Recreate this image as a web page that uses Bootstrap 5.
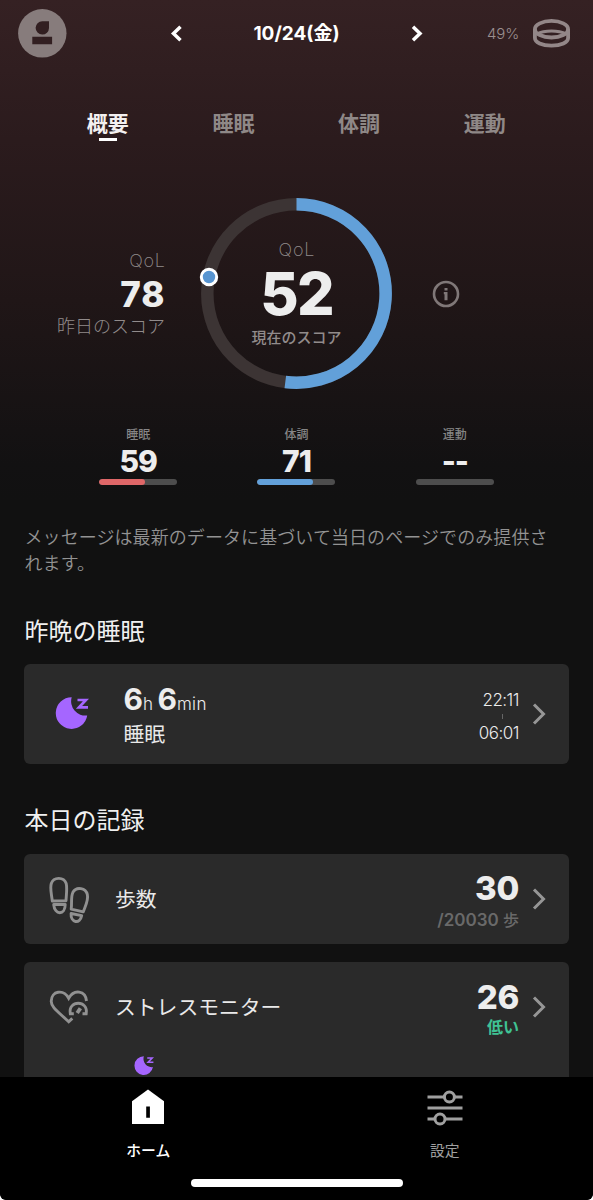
<!DOCTYPE html>
<html lang="ja">
<head>
<meta charset="utf-8">
<meta name="viewport" content="width=device-width, initial-scale=1">
<title>概要</title>
<link href="https://cdn.jsdelivr.net/npm/bootstrap@5.3.0/dist/css/bootstrap.min.css" rel="stylesheet">
<style>
  html { background: #fff; }
  body { margin: 0; background: #fff; font-family: Inter, "Noto Sans CJK JP", sans-serif; color: #ededed; line-height: 1; }
  svg { display: block; flex: none; }
  .screen { height: 1200px; overflow: hidden; border-radius: 0 0 6px 6px; background: linear-gradient(#352123 0, #2b1b1d 140px, #201617 300px, #121112 465px, #111 500px); }
  .jp { font-family: "Noto Sans CJK JP", sans-serif; }
  .topbar { height: 67px; padding: 0 24px 0 18px; display: grid; grid-template-columns: 150px 1fr 150px; }
  .datenav { width: 253px; justify-self: center; transform: translateX(2px); }
  .date { font-size: 19px; font-weight: 700; letter-spacing: 0; color: #fff; }
  .battery { font-size: 15px; font-weight: 300; color: #9b8f90; letter-spacing: -.2px; }
  .tabs { padding: 41px 45.5px 0 45px; height: 131px; }
  .tabs a { flex: 1; text-align: center; text-decoration: none; font-size: 21px; line-height: 29px; font-weight: 700; color: #8f8887; }
  .tabs a.active { color: #f3f0f0; }
  .tabs a.active::after { content: ""; display: block; width: 18px; height: 3px; margin: 1px auto 0; background: #fff; }
  .hero { display: grid; grid-template-columns: 165px 191px 1fr; column-gap: 36px; height: 191px; }
  .lite { font-weight: 200; }
  .muted { color: #918b8b; }
  .qol { font-size: 18px; line-height: 20px; letter-spacing: .8px; margin-right: -.8px; }
  .prev b { font-size: 35px; line-height: 36px; font-weight: 800; margin-top: 5px; letter-spacing: 1px; margin-right: -.5px; }
  .prev small { font-size: 18px; line-height: 24px; font-weight: 300; margin-top: 1px; }
  .gauge { position: relative; }
  .gauge svg { position: absolute; left: -8px; top: 0; }
  .now { padding-top: 42px; position: relative; }
  .now b { font-size: 59px; line-height: 58px; font-weight: 800; margin-top: 5px; letter-spacing: -1.8px; }
  .now small { font-size: 15px; line-height: 22px; font-weight: 500; margin-top: 3px; }
  .minis { margin: 37px 59px 0 59px; display: grid; grid-template-columns: repeat(3, 1fr); }
  .mini { display: flex; flex-direction: column; align-items: center; }
  .mini span { font-size: 12px; line-height: 16px; font-weight: 500; color: #858585; }
  .mini b { font-size: 30px; line-height: 32px; font-weight: 800; margin-top: 3px; letter-spacing: -1px; }
  .mini .progress { width: 78px; height: 6px; margin-top: 2px; border-radius: 3px; background: #4d4d4d; }
  .mini .progress-bar { border-radius: 3px; }
  .red { background: #df6768; } .blue { background: #62a0d9; }
  .note { margin: 38px 35px 0 24.5px; font-size: 18px; line-height: 26px; font-weight: 350; letter-spacing: .08px; color: #939393; }
  .sec { margin: 0 0 0 24.500px; font-size: 24px; line-height: 34px; font-weight: 400; color: #f0f0f0; }
  .tile { margin: 0 24px; border-radius: 6px; background: #2a2a2a; padding-right: 24px; }
  .big { font-size: 33px; line-height: 34px; font-weight: 800; letter-spacing: -.3px; padding-top: 4px; }
  .label { font-size: 20.800px; line-height: 30px; color: #e9e9e9; }
  .shift { margin-top: -3px; }
  .dur { line-height: 34px; margin-top: 1px; white-space: nowrap; }
  .dur b { font-size: 30px; font-weight: 700; }
  .dur i { font-size: 17px; font-weight: 300; font-style: normal; }
  .dur i:last-child { letter-spacing: .3px; }
  .times { font-size: 17px; font-weight: 350; line-height: 20px; letter-spacing: -.5px; margin-top: 5px; }
  .times u { width: 1px; height: 5px; margin: 4px 16px; background: #666; }
  .chev { margin: 0 -1px 0 13px; }
  .goal { font-size: 17px; line-height: 24px; font-weight: 600; color: #696969; margin-top: 2px; }
  .goal span { font-size: 16px; font-weight: 500; }
  .low { font-size: 16px; line-height: 24px; font-weight: 700; color: #3fc294; }
  .bottomnav { height: 123px; background: #000; position: absolute; left: 0; right: 0; top: 1077px; border-radius: 0 0 6px 6px; }
  .bottomnav a { width: 296.5px; text-decoration: none; font-size: 14.800px; line-height: 20px; font-weight: 500; color: #fff; }
  .bottomnav a + a { color: #a0a0a0; font-weight: 400; }
  .homebar { width: 212px; height: 8px; border-radius: 4px; background: #fff; margin: 19px auto 0; }
</style>
</head>
<body>
<svg width="0" height="0" style="display:none">
  <symbol id="moon" viewBox="0 0 34 34">
    <path fill="#a566ff" d="M16.700 2.300A15.800 15.800 0 1 0 32.200 20.500A14.300 14.300 0 0 1 16.700 2.300Z"/>
    <path fill="none" stroke="#a566ff" stroke-width="2.700" d="M22.500 5h8.400L24 12.300h9"/>
  </symbol>
</svg>
<div class="screen position-relative">
  <header class="topbar align-items-center">
    <svg width="49" height="49" viewBox="0 0 49 49"><circle cx="24.300" cy="24.300" r="24.200" fill="#877c7c"/><path fill="#321f21" d="M31 12.200V19A6.700 6.700 0 1 1 24.300 12.200ZM14.300 27.800h19.800v7.400H14.300z"/></svg>
    <div class="datenav d-flex align-items-center justify-content-between">
      <svg width="12" height="18" viewBox="0 0 12 18"><path d="M10.500 1.800L3.500 8.500l7 6.700" fill="none" stroke="#fff" stroke-width="3.500"/></svg>
      <div class="date">10/24(金)</div>
      <svg width="12" height="18" viewBox="0 0 12 18"><path d="M2 1.800l7 6.700-7 6.700" fill="none" stroke="#fff" stroke-width="3.500"/></svg>
    </div>
    <div class="d-flex align-items-center justify-content-end">
      <span class="battery">49%</span>
      <svg width="37" height="29" viewBox="0 0 37 29" fill="none" stroke="#938788" stroke-width="3.800" style="margin:-1px 1.500px 0 13.500px"><path d="M1.900 10v9c0 4.300 7 7.700 16.600 7.700S35.100 23.300 35.100 19v-9"/><ellipse cx="18.500" cy="10.200" rx="16.600" ry="8.300"/><path d="M3.800 15C8 12.900 13 12 18.500 12s10.500 .9 14.700 3" stroke-width="3.200"/></svg>
    </div>
  </header>

  <nav class="tabs d-flex jp"><a href="#" class="active">概要</a><a href="#">睡眠</a><a href="#">体調</a><a href="#">運動</a></nav>

  <section class="hero">
    <div class="prev d-flex flex-column align-items-end justify-content-center">
      <span class="qol lite muted">QoL</span>
      <b>78</b>
      <small class="jp muted">昨日のスコア</small>
    </div>
    <div class="gauge">
      <svg width="199" height="191" viewBox="-103.500 -95.500 199 191" fill="none" stroke-width="12.500">
        <circle r="89.200" stroke="#3c3434"/>
        <path stroke="#62a0d9" d="M0 -89.200A89.200 89.200 0 1 1 -11.200 88.500"/>
        <circle cx="-87.500" cy="-16.500" r="7.700" fill="#5794d0" stroke="#fff" stroke-width="3"/>
      </svg>
      <div class="now d-flex flex-column align-items-center">
        <span class="qol lite muted">QoL</span>
        <b>52</b>
        <small class="jp muted">現在のスコア</small>
      </div>
    </div>
    <div class="d-flex align-items-center ps-1">
      <svg width="28" height="28" viewBox="0 0 28 28"><circle cx="14" cy="14" r="12" fill="none" stroke="#807878" stroke-width="2.600"/><path d="M12.500 8h3v2.500h-3zM11.800 12h3.700v8.200h-3v-6h-.7z" fill="#807878"/></svg>
    </div>
  </section>

  <section class="minis">
    <div class="mini"><span class="jp">睡眠</span><b>59</b><div class="progress"><div class="progress-bar red" style="width:59%"></div></div></div>
    <div class="mini"><span class="jp">体調</span><b>71</b><div class="progress"><div class="progress-bar blue" style="width:71%"></div></div></div>
    <div class="mini"><span class="jp">運動</span><b>--</b><div class="progress"></div></div>
  </section>

  <p class="note jp">メッセージは最新のデータに基づいて当日のページでのみ提供されます。</p>

  <h2 class="sec jp" style="margin-top:38px">昨晩の睡眠</h2>
  <div class="tile d-flex align-items-center" style="height:100px;margin-top:17px;padding-left:31px">
    <svg width="34" height="34" style="margin-top:-4px"><use href="#moon"/></svg>
    <div class="flex-grow-1" style="padding-left:34.500px">
      <div class="dur"><b>6</b><i>h</i> <b>6</b><i>min</i></div>
      <div class="label jp shift">睡眠</div>
    </div>
    <div class="times d-flex flex-column align-items-end"><span>22:11</span><u></u><span>06:01</span></div>
    <svg class="chev" width="14" height="22" viewBox="0 0 14 22"><path d="M2 1.500L11.500 11 2 20.500" fill="none" stroke="#969696" stroke-width="3"/></svg>
  </div>

  <h2 class="sec jp" style="margin-top:38px">本日の記録</h2>
  <div class="tile d-flex align-items-center" style="height:90px;margin-top:18px;padding-left:25px">
    <svg width="42" height="50" viewBox="0 0 42 50" fill="none" stroke="#919191" stroke-width="2.900" stroke-linejoin="round" style="margin-top:2px">
      <path d="M3.300 26C2.500 19 .8 13.500 2.300 8.500 4.600 1.800 14.800 1.600 17.200 8.500c1.200 5 0 12-.2 17.200z"/>
      <path d="M4.700 29.500h11.500c0 11-10.500 11-11.500 0z"/>
      <path d="M22.200 34.200c.9-6.700-.5-12.700 1.700-16.900 3.700-6.300 12.900-4.200 14.400 2.100 1.500 6-2.300 12-4 17.500z"/>
      <path d="M22.100 38.500l10.600 2.100c-1.600 8.900-11.400 7.400-10.600-2.100z"/>
    </svg>
    <div class="label jp flex-grow-1 shift" style="padding-left:24px">歩数</div>
    <div class="text-end"><div class="big">30</div><div class="goal">/20030 <span class="jp">歩</span></div></div>
    <svg class="chev" width="14" height="22" viewBox="0 0 14 22"><path d="M2 1.500L11.500 11 2 20.500" fill="none" stroke="#969696" stroke-width="3"/></svg>
  </div>

  <div class="tile" style="height:140px;margin-top:18px;padding-left:25px">
    <div class="d-flex align-items-center" style="height:90px">
      <svg width="42" height="36" viewBox="0 0 42 36" fill="none" stroke="#919191" stroke-width="2.900">
        <path d="M37.500 12C36.500 1.500 25 -.2 19.700 9.300 14.500 -.2 2.300 1.800 2.200 12.300c0 5.700 6 9.700 17.500 20.500l3.600-3.400"/>
        <path d="M24.800 24.700h-3.500c-2.600-13.900 18.400-13.900 15.900 0h-3.700"/>
        <path d="M28.200 24l3.200-4.800" stroke-width="3.800"/>
      </svg>
      <div class="label jp flex-grow-1 shift" style="padding-left:24px">ストレスモニター</div>
      <div class="text-end"><div class="big">26</div><div class="low jp">低い</div></div>
      <svg class="chev" width="14" height="22" viewBox="0 0 14 22"><path d="M2 1.500L11.500 11 2 20.500" fill="none" stroke="#969696" stroke-width="3"/></svg>
    </div>
    <svg width="20" height="20" style="margin:3px 0 0 85px"><use href="#moon"/></svg>
  </div>

  <nav class="bottomnav">
    <div class="d-flex jp">
      <a href="#" class="d-flex flex-column align-items-center"><svg width="32" height="35" viewBox="0 0 32 35" style="margin:12px 0 16px"><path fill="#fff" d="M16 .5L32 12.300V35H0V12.300z"/><path d="M14.200 17.500h3.700v11.300h-3.700z"/></svg>ホーム</a>
      <a href="#" class="d-flex flex-column align-items-center"><svg width="36" height="36" viewBox="0 0 36 36" style="margin:13px 0 14px" fill="none" stroke="#a0a0a0" stroke-width="3"><path d="M.5 7h16.300M28 7h7.500M.5 18h35M.5 29h6.800M18.600 29h16.900"/><circle cx="22.400" cy="7" r="5"/><circle cx="13" cy="29" r="5"/></svg>設定</a>
    </div>
    <div class="homebar"></div>
  </nav>
</div>
</body>
</html>
